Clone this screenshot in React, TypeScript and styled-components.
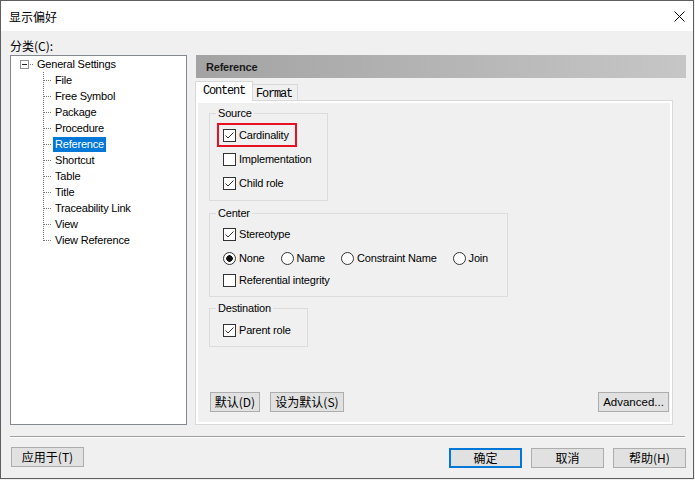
import * as React from "react";
import styled, { createGlobalStyle, css } from "styled-components";

const UI_FONT = `"Liberation Sans", "Noto Sans CJK SC", sans-serif`;
const CJK_FONT = `"Noto Sans CJK SC", "Liberation Sans", sans-serif`;
const DOT = "#7a7a7a";

const GlobalStyle = createGlobalStyle`
  html, body {
    margin: 0;
    padding: 0;
    background: #f0f0f0;
  }
  * {
    box-sizing: border-box;
  }
`;

const SWindow = styled.div`
  width: 694px;
  height: 479px;
  border: 1px solid #5f5f5f;
  background: #f0f0f0;
  display: flex;
  flex-direction: column;
  font-family: ${UI_FONT};
  font-size: 11px;
  letter-spacing: -0.2px;
  color: #000;
`;

const STitleBar = styled.div`
  height: 30px;
  flex: none;
  background: #fff;
  display: flex;
  align-items: center;
  justify-content: space-between;
  padding: 0 8px 0 8px;
`;

const STitleText = styled.span`
  font-family: ${CJK_FONT};
  font-size: 12px;
  letter-spacing: 0;
`;

const SCloseButton = styled.div`
  width: 11px;
  height: 11px;
  display: flex;
`;

const SBody = styled.div`
  flex: 1;
  display: flex;
  flex-direction: column;
  padding: 0 7px 0 9px;
`;

const SMain = styled.div`
  display: flex;
  gap: 8px;
`;

const SLeftCol = styled.div`
  width: 177px;
  display: flex;
  flex-direction: column;
`;

const SCategoryLabel = styled.div`
  height: 24px;
  padding-top: 7px;
  line-height: 16px;
  font-family: ${CJK_FONT};
  font-size: 12px;
  letter-spacing: 0;
`;

const STreeBox = styled.div`
  height: 370px;
  border: 1px solid #828790;
  background: #fff;
  display: flex;
  flex-direction: column;
`;

const STreeRow = styled.div<{ $child?: boolean }>`
  height: 16px;
  display: flex;
  align-items: center;
  padding-left: ${({ $child }) => ($child ? "32px" : "9px")};
`;

const SExpander = styled.span`
  width: 9px;
  height: 9px;
  border: 1px solid #919191;
  background: linear-gradient(#222, #222) center / 5px 1px no-repeat, #fff;
`;

const SRootConnector = styled.span`
  width: 5px;
  height: 1px;
  background: repeating-linear-gradient(to right, ${DOT} 0 1px, transparent 1px 2px) 1px 0 / 4px 1px no-repeat;
`;

const SConnector = styled.span<{ $last?: boolean }>`
  width: 9px;
  height: 16px;
  align-self: stretch;
  background-image: repeating-linear-gradient(to bottom, ${DOT} 0 1px, transparent 1px 2px),
    repeating-linear-gradient(to right, ${DOT} 0 1px, transparent 1px 2px);
  background-size: 1px ${({ $last }) => ($last ? "9px" : "16px")}, 8px 1px;
  background-position: 0 0, 1px 8px;
  background-repeat: no-repeat;
`;

const SNodeLabel = styled.span<{ $selected?: boolean }>`
  height: 15px;
  line-height: 15px;
  padding: 0 2px;
  margin-left: 1px;
  align-self: flex-end;
  white-space: nowrap;
  ${({ $selected }) =>
    $selected &&
    css`
      background: #0078d7;
      color: #fff;
    `}
`;

const SRightCol = styled.div`
  width: 491px;
  margin-top: 24px;
  display: flex;
  flex-direction: column;
`;

const SPanelHeader = styled.div`
  height: 23px;
  margin-left: 1px;
  padding-left: 10px;
  display: flex;
  align-items: center;
  font-weight: bold;
  color: #1a1a1a;
  background: linear-gradient(to right, #a3a3a3, #c6c6c6);
`;

const STabStrip = styled.div`
  margin-top: 3px;
  height: 19px;
  display: flex;
  align-items: flex-end;
`;

const STab = styled.div<{ $active?: boolean }>`
  font-family: "Liberation Mono", monospace;
  font-size: 12px;
  letter-spacing: -1.2px;
  border: 1px solid #d9d9d9;
  border-bottom: none;
  display: flex;
  align-items: center;
  ${({ $active }) =>
    $active
      ? css`
          width: 58px;
          height: 20px;
          margin-bottom: -1px;
          padding: 0 0 1px 7px;
          background: #fff;
          position: relative;
          z-index: 1;
        `
      : css`
          width: 45px;
          height: 16px;
          padding: 2px 0 0 3px;
          border-left: none;
          background: #f0f0f0;
        `}
`;

const STabPanel = styled.div`
  width: 478px;
  height: 325px;
  border: 1px solid #d9d9d9;
  background: #fff;
  padding: 2px;
`;

const SPanelInner = styled.div`
  height: 100%;
  background: #f0f0f0;
  padding: 3px 1px 10px 11px;
  display: flex;
  flex-direction: column;
`;

const SGroup = styled.fieldset<{ $w: number; $top: number; $pt: number; $pb: number }>`
  width: ${({ $w }) => $w}px;
  margin: ${({ $top }) => $top}px 0 0 0;
  padding: ${({ $pt, $pb }) => `${$pt}px 6px ${$pb}px 13px`};
  border: 1px solid #dcdcdc;
  min-inline-size: 0;
`;

const SGroupLegend = styled.legend`
  padding: 0 2px;
  margin-left: -7px;
  line-height: 14px;
  height: 14px;
`;

const SCheckRow = styled.div<{ $h?: number; $marked?: boolean }>`
  height: ${({ $h }) => $h ?? 24}px;
  display: flex;
  align-items: center;
  gap: 3px;
  white-space: nowrap;
  ${({ $marked }) =>
    $marked &&
    css`
      width: 80px;
      margin-left: -6px;
      padding-left: 6px;
      box-shadow: inset 0 0 0 2px #e81123;
    `}
`;

const SBox = styled.span`
  width: 13px;
  height: 13px;
  flex: none;
  border: 1px solid #333;
  background: #fff;
  display: flex;
  align-items: center;
  justify-content: center;
`;

const SRadioRow = styled.div`
  height: 24px;
  display: flex;
  align-items: center;
  gap: 16px;
`;

const SRadioItem = styled.label`
  display: flex;
  align-items: center;
  gap: 3px;
  white-space: nowrap;
`;

const SRadioCircle = styled.span<{ $on?: boolean }>`
  width: 13px;
  height: 13px;
  flex: none;
  border-radius: 50%;
  border: 1px solid #333;
  background: ${({ $on }) =>
    $on ? "radial-gradient(circle, #111 0 3px, #fff 3.5px)" : "#fff"};
`;

const SButtonBar = styled.div`
  margin-top: auto;
  margin-left: 1px;
  display: flex;
  gap: 10px;
`;

const SSpacer = styled.div`
  flex: 1;
`;

const SPushButton = styled.button<{ $w: number; $default?: boolean; $latin?: boolean }>`
  width: ${({ $w }) => $w}px;
  height: 20px;
  padding: 0;
  background: #e1e1e1;
  border: ${({ $default }) => ($default ? "2px solid #0078d7" : "1px solid #adadad")};
  font-family: ${({ $latin }) => ($latin ? UI_FONT : CJK_FONT)};
  font-size: ${({ $latin }) => ($latin ? "11.5px" : "12px")};
  letter-spacing: 0;
  color: #000;
  line-height: 16px;
`;

const SSeparator = styled.div`
  margin-top: 11px;
  height: 2px;
  border-top: 1px solid #a0a0a0;
  border-bottom: 1px solid #fff;
  margin-right: 1px;
`;

const SFooter = styled.div`
  margin-top: 9px;
  display: flex;
  align-items: flex-start;
  padding-left: 1px;
`;

const SFooterRight = styled.div`
  margin-left: auto;
  margin-top: 1px;
  display: flex;
  gap: 9px;
`;

const CloseIcon = () => (
  <svg width="11" height="11" viewBox="0 0 11 11">
    <path d="M0.5 0.5 L10.5 10.5 M10.5 0.5 L0.5 10.5" stroke="#000" strokeWidth="1" />
  </svg>
);

const CheckMark = () => (
  <svg width="11" height="11" viewBox="0 0 11 11">
    <path d="M1.5 5.5 L4 8 L9.5 2.5" stroke="#333" strokeWidth="1" fill="none" />
  </svg>
);

interface ICheckProps {
  label: string;
  checked?: boolean;
  h?: number;
  marked?: boolean;
}

const Check = ({ label, checked, h, marked }: ICheckProps) => (
  <SCheckRow $h={h} $marked={marked}>
    <SBox>{checked && <CheckMark />}</SBox>
    <span>{label}</span>
  </SCheckRow>
);

const treeChildren = [
  "File",
  "Free Symbol",
  "Package",
  "Procedure",
  "Reference",
  "Shortcut",
  "Table",
  "Title",
  "Traceability Link",
  "View",
  "View Reference",
];

const radios = ["None", "Name", "Constraint Name", "Join"];

const App = () => {
  return (
    <SWindow>
      <GlobalStyle />
      <STitleBar>
        <STitleText>显示偏好</STitleText>
        <SCloseButton>
          <CloseIcon />
        </SCloseButton>
      </STitleBar>
      <SBody>
        <SMain>
          <SLeftCol>
            <SCategoryLabel>分类(C):</SCategoryLabel>
            <STreeBox>
              <STreeRow>
                <SExpander />
                <SRootConnector />
                <SNodeLabel>General Settings</SNodeLabel>
              </STreeRow>
              {treeChildren.map((name, i) => (
                <STreeRow $child key={name}>
                  <SConnector $last={i === treeChildren.length - 1} />
                  <SNodeLabel $selected={name === "Reference"}>{name}</SNodeLabel>
                </STreeRow>
              ))}
            </STreeBox>
          </SLeftCol>
          <SRightCol>
            <SPanelHeader>Reference</SPanelHeader>
            <STabStrip>
              <STab $active>Content</STab>
              <STab>Format</STab>
            </STabStrip>
            <STabPanel>
              <SPanelInner>
                <SGroup $w={119} $top={0} $pt={3} $pb={5}>
                  <SGroupLegend>Source</SGroupLegend>
                  <Check label="Cardinality" checked marked />
                  <Check label="Implementation" />
                  <Check label="Child role" checked />
                </SGroup>
                <SGroup $w={299} $top={5} $pt={2} $pb={6}>
                  <SGroupLegend>Center</SGroupLegend>
                  <Check label="Stereotype" checked />
                  <SRadioRow>
                    {radios.map((r) => (
                      <SRadioItem key={r}>
                        <SRadioCircle $on={r === "None"} />
                        <span>{r}</span>
                      </SRadioItem>
                    ))}
                  </SRadioRow>
                  <Check label="Referential integrity" h={20} />
                </SGroup>
                <SGroup $w={99} $top={4} $pt={3} $pb={4}>
                  <SGroupLegend>Destination</SGroupLegend>
                  <Check label="Parent role" checked />
                </SGroup>
                <SButtonBar>
                  <SPushButton $w={50}>默认(D)</SPushButton>
                  <SPushButton $w={74}>设为默认(S)</SPushButton>
                  <SSpacer />
                  <SPushButton $w={71} $latin>
                    Advanced...
                  </SPushButton>
                </SButtonBar>
              </SPanelInner>
            </STabPanel>
          </SRightCol>
        </SMain>
        <SSeparator />
        <SFooter>
          <SPushButton $w={73}>应用于(T)</SPushButton>
          <SFooterRight>
            <SPushButton $w={73} $default>
              确定
            </SPushButton>
            <SPushButton $w={73}>取消</SPushButton>
            <SPushButton $w={73}>帮助(H)</SPushButton>
          </SFooterRight>
        </SFooter>
      </SBody>
    </SWindow>
  );
};

export default App;
